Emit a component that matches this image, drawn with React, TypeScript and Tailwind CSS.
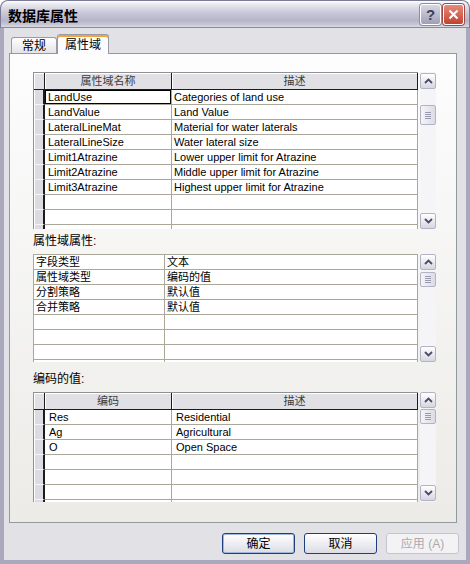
import React from 'react';

const domains: [string, string][] = [
  ['LandUse', 'Categories of land use'],
  ['LandValue', 'Land Value'],
  ['LateralLineMat', 'Material for water laterals'],
  ['LateralLineSize', 'Water lateral size'],
  ['Limit1Atrazine', 'Lower upper limit for Atrazine'],
  ['Limit2Atrazine', 'Middle upper limit for Atrazine'],
  ['Limit3Atrazine', 'Highest upper limit for Atrazine'],
  ['', ''],
  ['', ''],
  ['', ''],
];

const props: [string, string][] = [
  ['字段类型', '文本'],
  ['属性域类型', '编码的值'],
  ['分割策略', '默认值'],
  ['合并策略', '默认值'],
  ['', ''],
  ['', ''],
  ['', ''],
  ['', ''],
];

const codes: [string, string][] = [
  ['Res', 'Residential'],
  ['Ag', 'Agricultural'],
  ['O', 'Open Space'],
  ['', ''],
  ['', ''],
  ['', ''],
  ['', ''],
];

const Chevron = ({ up }: { up?: boolean }) => (
  <svg width="9" height="6" viewBox="0 0 9 6">
    <polyline
      points={up ? '1,5 4.5,1.5 8,5' : '1,1 4.5,4.5 8,1'}
      fill="none"
      stroke="#4a4a66"
      strokeWidth="1.8"
    />
  </svg>
);

const ScrollBtn = ({ up }: { up?: boolean }) => (
  <div className="w-[16px] h-[16px] rounded-[2px] border border-[#b4b3c6] bg-gradient-to-b from-white to-[#d6d6e1] flex items-center justify-center">
    <Chevron up={up} />
  </div>
);

const Thumb = ({ h }: { h: string }) => (
  <div className={`w-[16px] ${h} rounded-[2px] border border-[#b4b3c6] bg-gradient-to-r from-[#f4f4f8] to-[#dcdce6] flex flex-col items-center justify-center gap-[1px]`}>
    <div className="w-[6px] h-[1px] bg-[#9a9ab0]" />
    <div className="w-[6px] h-[1px] bg-[#9a9ab0]" />
    <div className="w-[6px] h-[1px] bg-[#9a9ab0]" />
    <div className="w-[6px] h-[1px] bg-[#9a9ab0]" />
  </div>
);

// header cell of a data grid
const HeadCell = ({ children, className }: { children?: React.ReactNode; className: string }) => (
  <div className={`h-[17px] bg-[#e1e0e5] border-r border-b border-[#1c1c1c] shadow-[inset_1px_1px_0_#ffffff] flex items-center justify-center text-[11px] text-[#3c3c3c] ${className}`}>
    {children}
  </div>
);

const Selector = () => (
  <div className="w-[11px] h-[15px] shrink-0 bg-[#dcdbe1] border-r-2 border-r-[#1c1c1c] border-b border-b-[#f6f6f6] shadow-[inset_1px_0_0_#ffffff]" />
);

export default function App() {
  return (
    <div className="w-[470px] h-[564px] flex flex-col font-['Liberation_Sans','Noto_Sans_CJK_SC',sans-serif] text-black bg-white">
      {/* title bar */}
      <div className="h-[28px] shrink-0 rounded-t-[8px] border border-b-0 border-[#7c7b96] bg-[linear-gradient(to_bottom,#ffffff_0%,#e9e9f0_12%,#cbcbdb_40%,#b5b4c9_72%,#c8c8d7_88%,#e4e4ec_100%)] flex items-center pl-[7px] pr-[5px] shadow-[inset_0_-1px_0_#8a89a3]">
        <span className="font-['Noto_Sans_CJK_SC',sans-serif] font-bold text-[14px] leading-none text-black">数据库属性</span>
        <div className="ml-auto flex gap-[2px]">
          <div className="w-[21px] h-[21px] rounded-[3px] border border-white bg-gradient-to-b from-[#d8d8e4] to-[#9f9eb8] shadow-[0_0_0_1px_#8d8ca6] flex items-center justify-center text-[15px] font-bold text-[#3e3e58] leading-none">?</div>
          <div className="w-[21px] h-[21px] rounded-[3px] border border-white bg-gradient-to-b from-[#e88a7c] to-[#c2402f] shadow-[0_0_0_1px_#9c4a44] flex items-center justify-center">
            <svg width="11" height="11" viewBox="0 0 11 11">
              <path d="M1.5 1.5 L9.5 9.5 M9.5 1.5 L1.5 9.5" stroke="#ffffff" strokeWidth="2" />
            </svg>
          </div>
        </div>
      </div>

      {/* body */}
      <div className="flex-1 flex flex-col bg-[#e2e1e6] border-x-[4px] border-b-[4px] border-[#a9a8bd]">
        {/* tabs */}
        <div className="mt-[6px] h-[19px] ml-[7px] flex items-end text-[12px]">
          <div className="w-[46px] h-[16px] rounded-t-[3px] border border-b-0 border-[#9a9aa6] bg-gradient-to-b from-white to-[#e4e3e8] flex items-center justify-center leading-none">常规</div>
          <div className="relative z-10 w-[52px] h-[20px] -mb-[1px] rounded-t-[3px] border border-b-0 border-[#9a9aa6] bg-[#fcfcfe] shadow-[inset_0_2px_0_#f0a43c] flex items-center justify-center leading-none">属性域</div>
        </div>

        {/* tab panel */}
        <div className="ml-[5px] w-[448px] h-[470px] border border-[#919b9c] bg-gradient-to-b from-[#fdfdfe] to-[#ecebe7] pl-[23px] pt-[18px]">
          {/* domains grid */}
          <div className="flex">
            <div className="w-[385px] h-[157px] overflow-hidden border-l border-t border-[#8f8f94] bg-white">
              <div className="flex">
                <HeadCell className="w-[11px]" />
                <HeadCell className="w-[127px]">属性域名称</HeadCell>
                <HeadCell className="flex-1">描述</HeadCell>
              </div>
              {domains.map(([a, b], i) => (
                <div key={i} className="flex h-[15px] text-[11px] leading-[14px]">
                  <Selector />
                  <div className="w-[127px] h-[15px] border-r border-b border-[#aca899] relative">
                    <div className={`h-[14px] pl-[2px] ${i === 0 ? 'border border-black mr-[0px]' : 'pl-[3px]'}`}>
                      {i === 0 ? <span className="relative -top-[1px]">{a}</span> : a}
                    </div>
                  </div>
                  <div className="flex-1 h-[15px] border-r border-b border-[#aca899] pl-[2px]">{b}</div>
                </div>
              ))}
            </div>
            <div className="ml-[2px] w-[16px] h-[157px] flex flex-col bg-[#f5f5f8]">
              <div className="mt-[1px]"><ScrollBtn up /></div>
              <div className="mt-[16px]"><Thumb h="h-[20px]" /></div>
              <div className="mt-auto"><ScrollBtn /></div>
            </div>
          </div>

          <div className="mt-[5px] h-[15px] text-[12px] leading-[15px]">属性域属性:</div>

          {/* property grid */}
          <div className="mt-[5px] flex">
            <div className="w-[385px] h-[108px] overflow-hidden border-l border-t border-[#aca899] bg-white">
              {props.map(([a, b], i) => (
                <div key={i} className="flex h-[15px] text-[11px] leading-[14px]">
                  <div className="w-[131px] h-[15px] border-r border-b border-[#aca899] pl-[2px]">{a}</div>
                  <div className="flex-1 h-[15px] border-r border-b border-[#aca899] pl-[2px]">{b}</div>
                </div>
              ))}
            </div>
            <div className="ml-[2px] w-[16px] h-[108px] flex flex-col bg-[#f5f5f8]">
              <ScrollBtn up />
              <div className="mt-[2px]"><Thumb h="h-[15px]" /></div>
              <div className="mt-auto"><ScrollBtn /></div>
            </div>
          </div>

          <div className="mt-[10px] h-[15px] text-[12px] leading-[15px]">编码的值:</div>

          {/* coded values grid */}
          <div className="mt-[5px] flex">
            <div className="w-[385px] h-[110px] overflow-hidden border-l border-t border-[#8f8f94] bg-white">
              <div className="flex">
                <HeadCell className="w-[11px]" />
                <HeadCell className="w-[127px]">编码</HeadCell>
                <HeadCell className="flex-1">描述</HeadCell>
              </div>
              {codes.map(([a, b], i) => (
                <div key={i} className="flex h-[15px] text-[11px] leading-[14px]">
                  <Selector />
                  <div className="w-[127px] h-[15px] border-r border-b border-[#aca899] pl-[4px]">{a}</div>
                  <div className="flex-1 h-[15px] border-r border-b border-[#aca899] pl-[4px]">{b}</div>
                </div>
              ))}
            </div>
            <div className="ml-[2px] w-[16px] h-[110px] flex flex-col bg-[#f5f5f8]">
              <ScrollBtn up />
              <div className="mt-[1px]"><Thumb h="h-[15px]" /></div>
              <div className="mt-auto mb-[1px]"><ScrollBtn /></div>
            </div>
          </div>
        </div>

        {/* dialog buttons */}
        <div className="mt-[10px] h-[21px] flex justify-end gap-[9px] pr-[7px] text-[12px]">
          <button className="w-[73px] h-[21px] rounded-[3px] border border-[#1d3f7a] bg-gradient-to-b from-white to-[#dcdce6] shadow-[inset_0_0_0_1px_#9fb6dd] leading-none">确定</button>
          <button className="w-[73px] h-[21px] rounded-[3px] border border-[#1d3f7a] bg-gradient-to-b from-white to-[#dcdce6] leading-none">取消</button>
          <button className="w-[73px] h-[21px] rounded-[3px] border border-[#c6c5cf] bg-[#f3f3f5] text-[#aaa9b0] leading-none">应用 (A)</button>
        </div>
      </div>
    </div>
  );
}
